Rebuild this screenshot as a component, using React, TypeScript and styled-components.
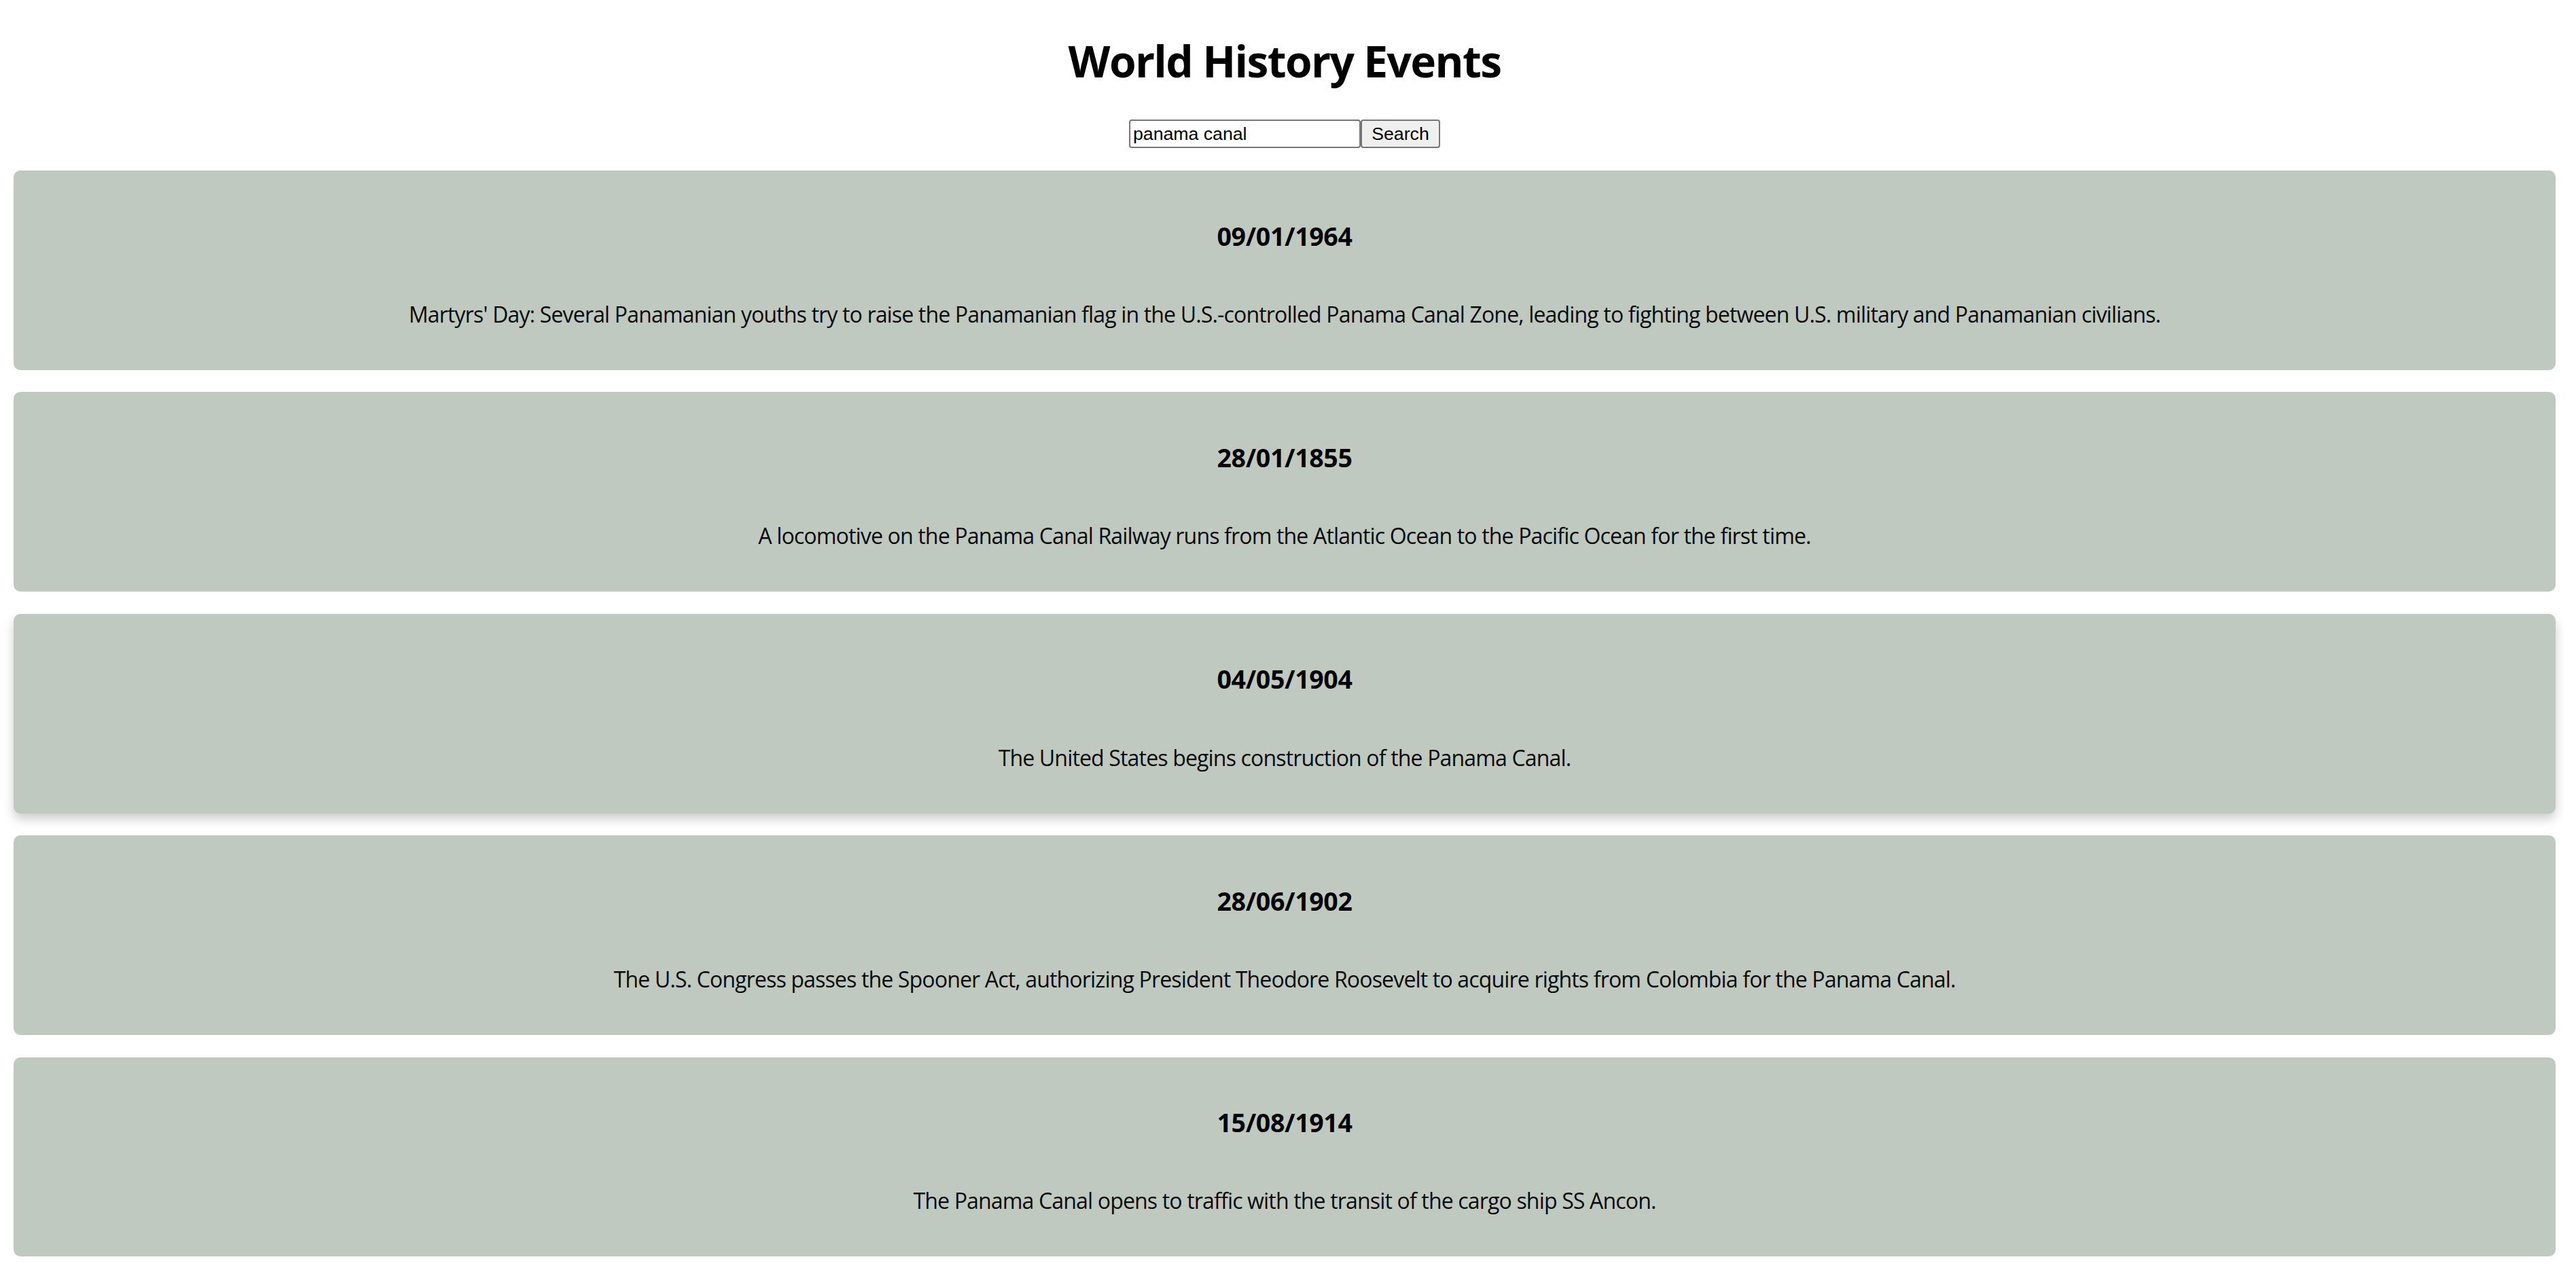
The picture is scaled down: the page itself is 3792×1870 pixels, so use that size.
import React from "react";
import styled, { createGlobalStyle } from "styled-components";

const GlobalStyle = createGlobalStyle`
  html, body {
    margin: 0;
    padding: 0;
    background: #ffffff;
  }
  body {
    font-family: "Open Sans", "Noto Sans", sans-serif;
    color: #000000;
  }
`;

const Page = styled.main`
  padding: 0 30px 20px 20px;
  display: flex;
  flex-direction: column;
`;

const Title = styled.h1`
  margin: 47px 0 39px;
  font-family: "Open Sans", "Noto Sans", sans-serif;
  font-size: 64px;
  font-weight: 700;
  line-height: 85px;
  text-align: center;
  letter-spacing: -1.6px;
`;

const SearchForm = styled.form`
  display: flex;
  justify-content: center;
  align-items: stretch;
  margin: 5px 0 33px;
  height: 42px;
`;

const SearchInput = styled.input`
  box-sizing: border-box;
  width: 341px;
  height: 42px;
  padding: 2px 4px;
  border: 2px solid #767676;
  border-radius: 4px;
  font-family: "Liberation Sans", Arial, sans-serif;
  font-size: 26.67px;
  color: #000;
  background: #fff;
  outline: none;
`;

const SearchButton = styled.button`
  box-sizing: border-box;
  width: 117px;
  height: 42px;
  padding: 2px 12px;
  border: 2px solid #767676;
  border-radius: 4px;
  background: #efefef;
  font-family: "Liberation Sans", Arial, sans-serif;
  font-size: 26.67px;
  color: #000;
  cursor: pointer;
`;

const EventList = styled.section`
  display: flex;
  flex-direction: column;
  gap: 32.5px;
`;

const EventCard = styled.article<{ $raised?: boolean }>`
  display: flex;
  flex-direction: column;
  padding: 32px;
  background: #bfc9c0;
  border-radius: 10px;
  text-align: center;
  box-shadow: ${(p) => (p.$raised ? "0 8px 16px 0 rgba(0, 0, 0, 0.2)" : "none")};
`;

const EventDate = styled.h3`
  margin: 39.5px 0 35.4px;
  font-size: 37.44px;
  font-weight: 700;
  line-height: 49px;
  letter-spacing: -0.3px;
`;

const EventText = styled.p`
  margin: 35px 0 29px;
  font-size: 32px;
  line-height: 42px;
  letter-spacing: -0.83px;
  color: #0a0a0a;
`;

const events = [
  {
    date: "09/01/1964",
    text: "Martyrs' Day: Several Panamanian youths try to raise the Panamanian flag in the U.S.-controlled Panama Canal Zone, leading to fighting between U.S. military and Panamanian civilians.",
  },
  {
    date: "28/01/1855",
    text: "A locomotive on the Panama Canal Railway runs from the Atlantic Ocean to the Pacific Ocean for the first time.",
  },
  {
    date: "04/05/1904",
    text: "The United States begins construction of the Panama Canal.",
    raised: true,
  },
  {
    date: "28/06/1902",
    text: "The U.S. Congress passes the Spooner Act, authorizing President Theodore Roosevelt to acquire rights from Colombia for the Panama Canal.",
  },
  {
    date: "15/08/1914",
    text: "The Panama Canal opens to traffic with the transit of the cargo ship SS Ancon.",
  },
];

export default function App() {
  return (
    <>
      <GlobalStyle />
      <Page>
        <Title>World History Events</Title>
        <SearchForm onSubmit={(e) => e.preventDefault()}>
          <SearchInput type="text" defaultValue="panama canal" />
          <SearchButton type="submit">Search</SearchButton>
        </SearchForm>
        <EventList>
          {events.map((ev) => (
            <EventCard key={ev.date} $raised={ev.raised}>
              <EventDate>{ev.date}</EventDate>
              <EventText>{ev.text}</EventText>
            </EventCard>
          ))}
        </EventList>
      </Page>
    </>
  );
}
